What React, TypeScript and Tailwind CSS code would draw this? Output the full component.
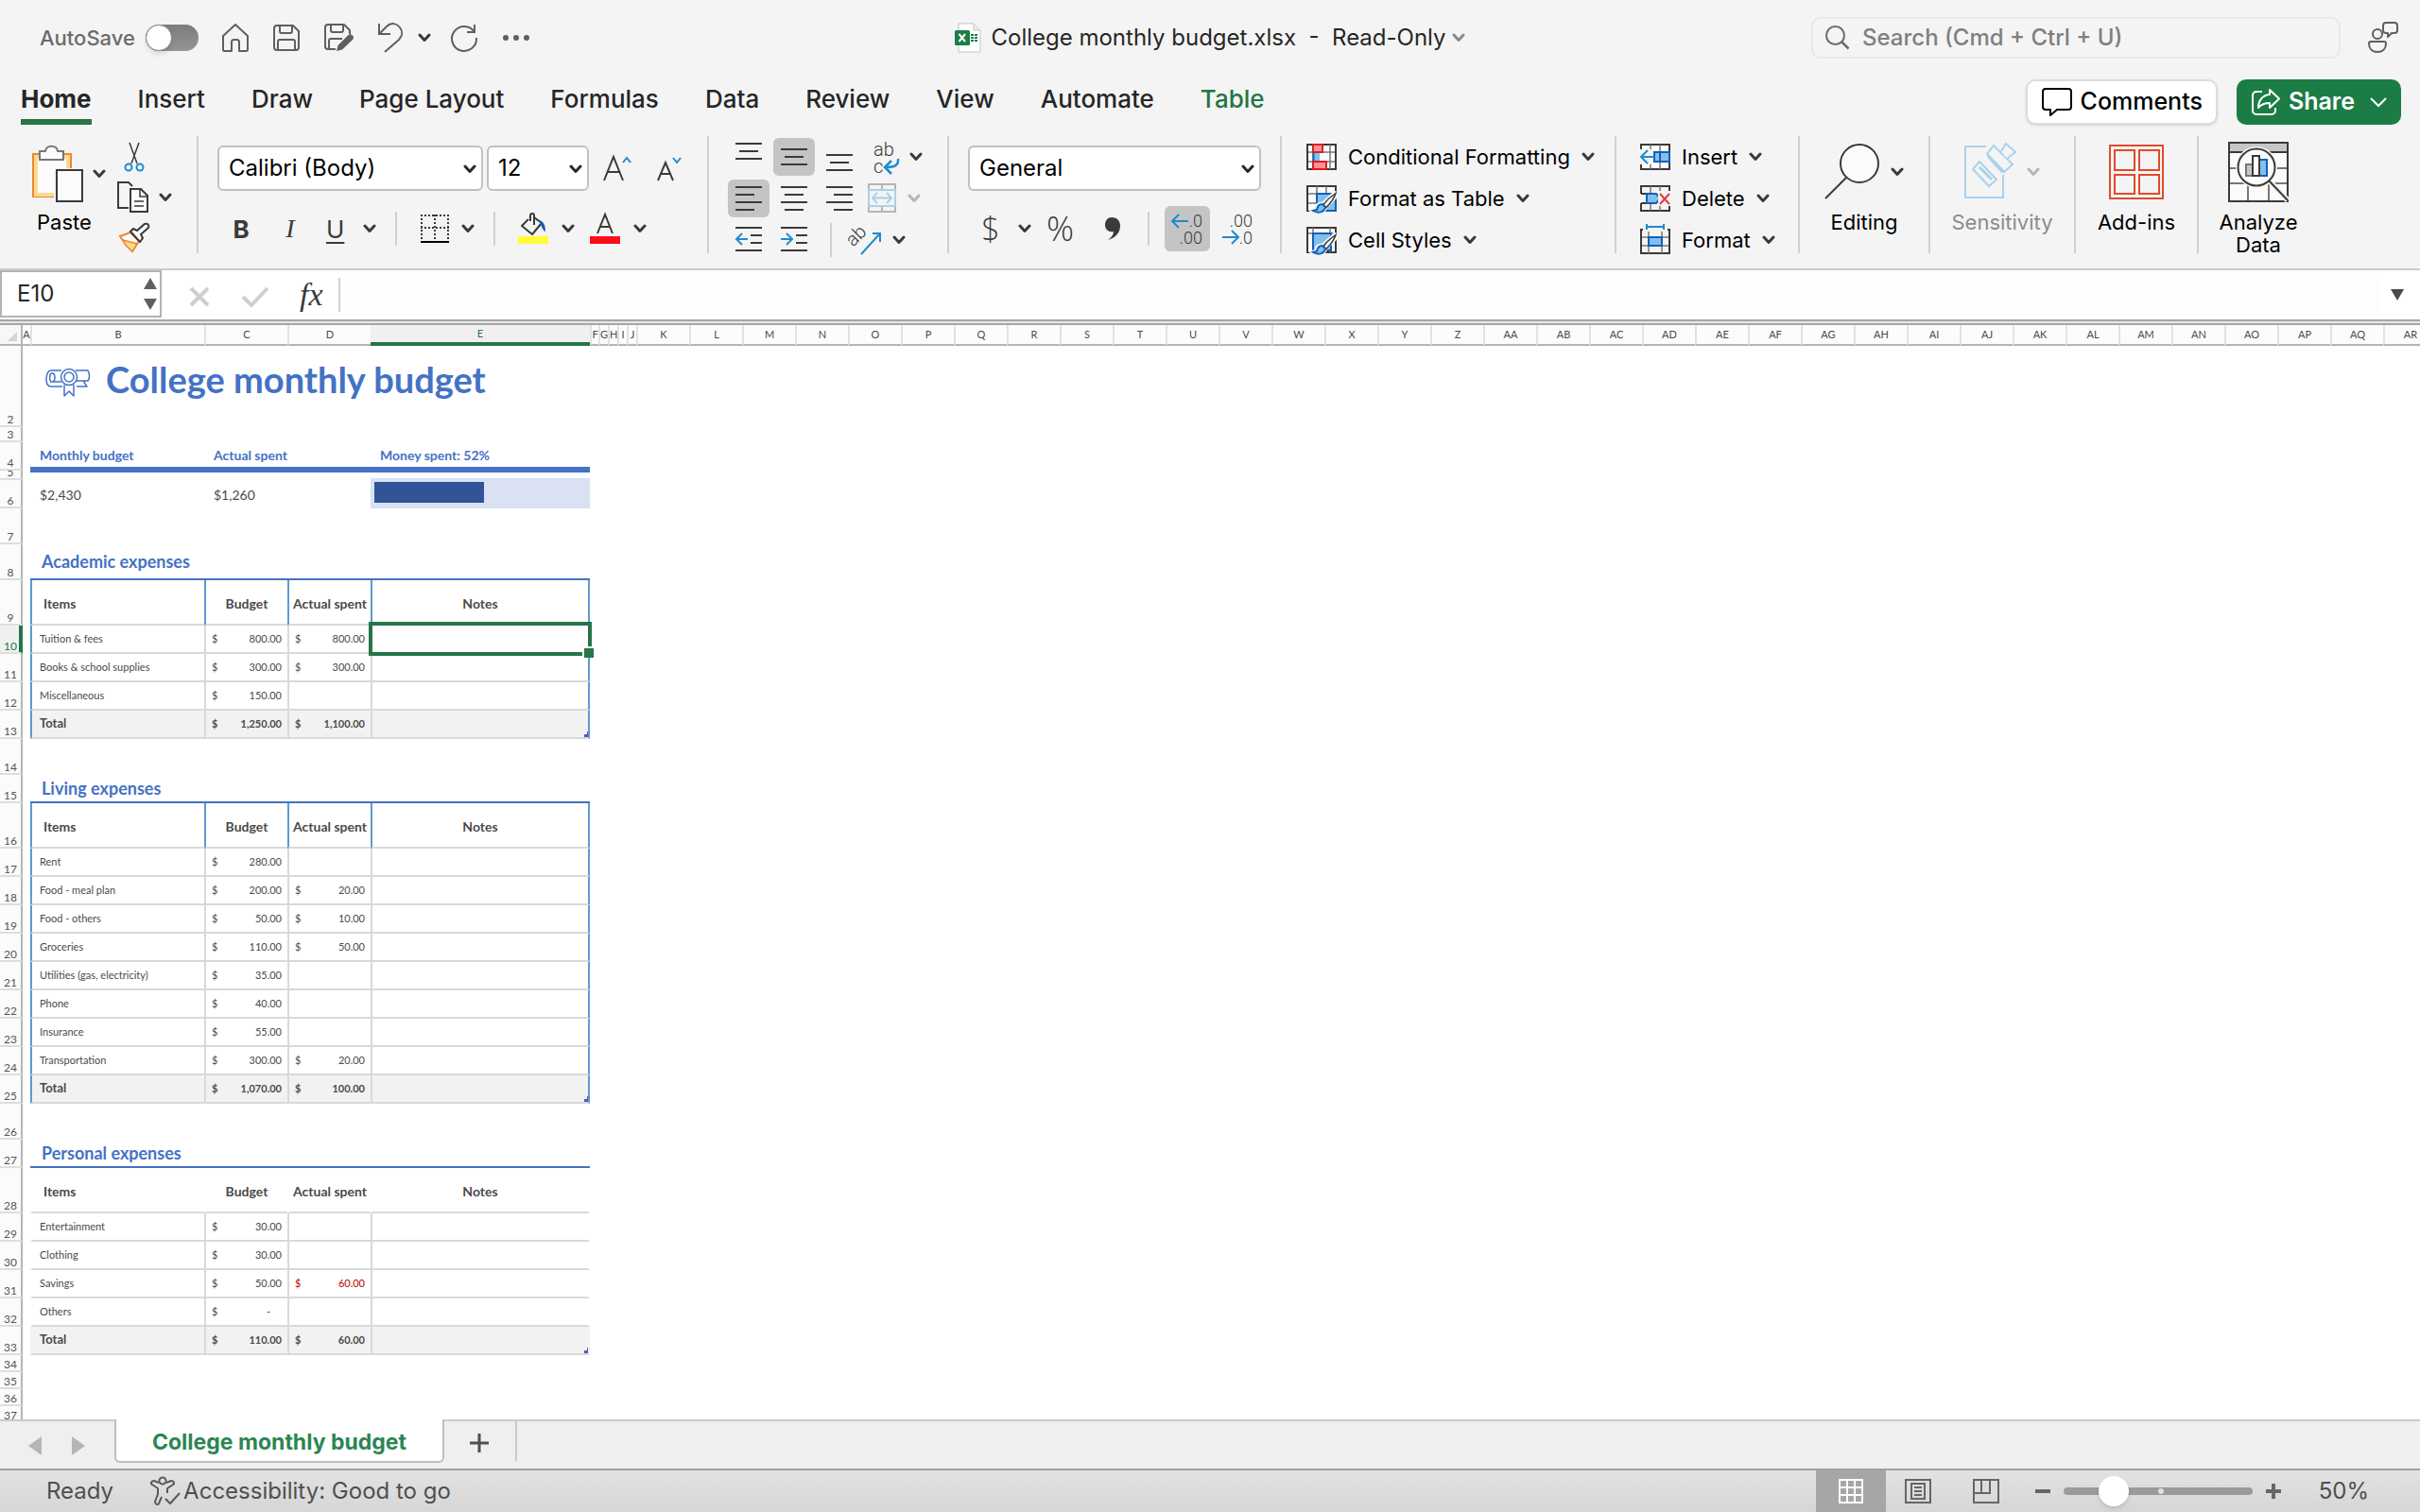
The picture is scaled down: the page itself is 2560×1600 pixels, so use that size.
import { useState } from "react"
import type { ReactNode } from "react"
import { clsx } from "clsx"

type Money = { value: string; over?: boolean }
type Line = { item: string; budget: string; spent?: Money }
type Section = { title: string; outlined: boolean; firstRow: number; lines: Line[]; total: Line }

const tabs = ["Home", "Insert", "Draw", "Page Layout", "Formulas", "Data", "Review", "View", "Automate", "Table"]

const letters = "ABCDEFGHIJKLMNOPQRSTUVWXYZ".split("")
const columns = [...letters, ...letters.slice(0, 18).map((letter) => `A${letter}`)]
const columnWidths: Record<string, string> = {
  A: "w-2",
  B: "w-[184px]",
  C: "w-[88px]",
  D: "w-[88px]",
  E: "w-[232px]",
  F: "w-[9px]",
  G: "w-[10px]",
  H: "w-[10px]",
  I: "w-[10px]",
  J: "w-[10px]",
}

const sections: Section[] = [
  {
    title: "Academic expenses",
    outlined: true,
    firstRow: 8,
    lines: [
      { item: "Tuition & fees", budget: "800.00", spent: { value: "800.00" } },
      { item: "Books & school supplies", budget: "300.00", spent: { value: "300.00" } },
      { item: "Miscellaneous", budget: "150.00" },
    ],
    total: { item: "Total", budget: "1,250.00", spent: { value: "1,100.00" } },
  },
  {
    title: "Living expenses",
    outlined: true,
    firstRow: 15,
    lines: [
      { item: "Rent", budget: "280.00" },
      { item: "Food - meal plan", budget: "200.00", spent: { value: "20.00" } },
      { item: "Food - others", budget: "50.00", spent: { value: "10.00" } },
      { item: "Groceries", budget: "110.00", spent: { value: "50.00" } },
      { item: "Utilities (gas, electricity)", budget: "35.00" },
      { item: "Phone", budget: "40.00" },
      { item: "Insurance", budget: "55.00" },
      { item: "Transportation", budget: "300.00", spent: { value: "20.00" } },
    ],
    total: { item: "Total", budget: "1,070.00", spent: { value: "100.00" } },
  },
  {
    title: "Personal expenses",
    outlined: false,
    firstRow: 27,
    lines: [
      { item: "Entertainment", budget: "30.00" },
      { item: "Clothing", budget: "30.00" },
      { item: "Savings", budget: "50.00", spent: { value: "60.00", over: true } },
      { item: "Others", budget: "-" },
    ],
    total: { item: "Total", budget: "110.00", spent: { value: "60.00" } },
  },
]

/* ---------- icons ---------- */

function Chevron({ className = "text-[#3a3a3a]" }: { className?: string }) {
  return (
    <svg width="14" height="10" viewBox="0 0 14 10" fill="none" stroke="currentColor" strokeWidth="3" className={clsx("shrink-0", className)}>
      <path d="M2 2l5 5.5L12 2" strokeLinecap="round" strokeLinejoin="round" />
    </svg>
  )
}

function Icon({ w, h, children, className }: { w: number; h: number; children: ReactNode; className?: string }) {
  return (
    <svg width={w} height={h} viewBox={`0 0 ${w} ${h}`} fill="none" className={clsx("shrink-0 overflow-visible", className)}>
      {children}
    </svg>
  )
}

const HomeIcon = () => (
  <Icon w={30} h={32}>
    <path d="M2 14L15 2l13 12v14.500a1.500 1.500 0 0 1-1.500 1.500H19v-9.500a2.500 2.500 0 0 0-2.500-2.500h-3a2.500 2.500 0 0 0-2.500 2.500V30H3.500A1.500 1.500 0 0 1 2 28.500z" stroke="#5f5f5f" strokeWidth="2" strokeLinejoin="round" />
  </Icon>
)

const SaveIcon = () => (
  <Icon w={30} h={30}>
    <path d="M5 2h17l6 6v17a3 3 0 0 1-3 3H5a3 3 0 0 1-3-3V5a3 3 0 0 1 3-3z" stroke="#5f5f5f" strokeWidth="2" />
    <path d="M8 2v6a2 2 0 0 0 2 2h9a2 2 0 0 0 2-2V2M6 28V19a2 2 0 0 1 2-2h14a2 2 0 0 1 2 2v9" stroke="#5f5f5f" strokeWidth="2" />
  </Icon>
)

const SaveEditIcon = () => (
  <Icon w={32} h={32}>
    <path d="M13 28H5a3 3 0 0 1-3-3V5a3 3 0 0 1 3-3h17l6 6v4M8 2v6a2 2 0 0 0 2 2h9a2 2 0 0 0 2-2V2M6 28V19a2 2 0 0 1 2-2h12" stroke="#5f5f5f" strokeWidth="2" />
    <path d="M14 30l1.500-6L26 13.500a3 3 0 0 1 5 4.500L20 28.500z" fill="#5f5f5f" />
  </Icon>
)

const UndoIcon = () => (
  <Icon w={30} h={34}>
    <path d="M3 2v11h12M3.500 12.500L11 5c5-5 11-3 14 1s3 9-1 13L9 32" stroke="#5f5f5f" strokeWidth="2" />
  </Icon>
)

const RedoIcon = () => (
  <Icon w={30} h={30}>
    <path d="M26 1v8h-8M26 9A13 13 0 1 0 28 15" stroke="#5f5f5f" strokeWidth="2" />
  </Icon>
)

const FileIcon = () => (
  <Icon w={28} h={32}>
    <path d="M4 1h16l7 7v23H4z" fill="#fff" stroke="#c4c4c4" />
    <path d="M20 1v7h7" fill="#eee" stroke="#c4c4c4" />
    <rect y="8" width="16" height="16" rx="1.500" fill="#1b7e45" />
    <path d="M4.500 12l6.500 8M11 12l-6.500 8" stroke="#fff" strokeWidth="2" />
    <path d="M17 12h3v2h-3zM21 12h3v2h-3zM17 15h3v2h-3zM21 15h3v2h-3zM17 18h3v2h-3zM21 18h3v2h-3z" fill="#1b7e45" />
  </Icon>
)

const SearchIcon = () => (
  <Icon w={28} h={28}>
    <circle cx="11.500" cy="11.500" r="9.500" stroke="#6b6b6b" strokeWidth="2" />
    <path d="M18.500 18.500l7 7" stroke="#6b6b6b" strokeWidth="2.500" />
  </Icon>
)

const PresenceIcon = () => (
  <Icon w={34} h={34}>
    <circle cx="11" cy="13" r="5" stroke="#5f5f5f" strokeWidth="2" />
    <path d="M4 21h14a2 2 0 0 1 2 2c0 5-3 9-9 9s-9-4-9-9a2 2 0 0 1 2-2zM20 1h9a3 3 0 0 1 3 3v5a3 3 0 0 1-3 3h-3l-4 4v-4h-2a3 3 0 0 1-3-3V4a3 3 0 0 1 3-3z" stroke="#5f5f5f" strokeWidth="2" strokeLinejoin="round" />
  </Icon>
)

const CommentIcon = () => (
  <Icon w={34} h={32}>
    <path d="M5 2h24a3 3 0 0 1 3 3v16a3 3 0 0 1-3 3H17l-7 6v-6H5a3 3 0 0 1-3-3V5a3 3 0 0 1 3-3z" stroke="#000" strokeWidth="2" strokeLinejoin="round" />
  </Icon>
)

const ShareIcon = () => (
  <Icon w={32} h={30}>
    <path d="M12 4H6a4 4 0 0 0-4 4v16a4 4 0 0 0 4 4h16a4 4 0 0 0 4-4v-3" stroke="#fff" strokeWidth="2" />
    <path d="M20 2l10 9.500L20 21v-5c-6 0-9 1.500-12 5 0-8 5-13.500 12-14z" stroke="#fff" strokeWidth="2" strokeLinejoin="round" />
  </Icon>
)

const PasteIcon = () => (
  <Icon w={56} h={60}>
    <path d="M2 9h40v45H2z" fill="#fbfbfb" stroke="#ed8733" strokeWidth="2" />
    <path d="M5 12h34v40H5z" stroke="#f8dc8e" strokeWidth="4" />
    <path d="M9 15V6h6c1-7 12-7 13 0h6v9z" fill="#fbfbfb" stroke="#797774" strokeWidth="2" />
    <path d="M24 24h32v36H24z" fill="#f4f4f4" />
    <path d="M27 26h27v33H27z" fill="#fbfbfb" stroke="#3a3a38" strokeWidth="2" />
  </Icon>
)

const CutIcon = () => (
  <Icon w={22} h={32}>
    <path d="M6 1l8 22M16 1L8 23" stroke="#3a3a38" strokeWidth="1.500" />
    <circle cx="5" cy="27" r="3.500" stroke="#1e8bcd" strokeWidth="2" />
    <circle cx="17" cy="27" r="3.500" stroke="#1e8bcd" strokeWidth="2" />
  </Icon>
)

const CopyIcon = () => (
  <Icon w={34} h={34}>
    <path d="M12 28H1V1h11l4 4" stroke="#3a3a38" strokeWidth="2" />
    <path d="M14 8h11l7 7v17H14z" fill="#fbfbfb" stroke="#3a3a38" strokeWidth="2" />
    <path d="M24 8v8h8M18 21h10M18 26h10" stroke="#3a3a38" strokeWidth="1.500" />
  </Icon>
)

const PainterIcon = () => (
  <Icon w={34} h={32}>
    <path d="M2 14l11-4 9 9-7 11C11 25 6 21 2 14z" fill="#fbfbfb" stroke="#ed8733" strokeWidth="2" />
    <path d="M5 18l15 4-5 8c-4-3-8-7-10-12z" fill="#f8dc8e" stroke="#ed8733" strokeWidth="1.500" />
    <path d="M13 9l3-3 4 2 8-7c3-1 5 1 4 4l-8 7 2 4-3 4z" fill="#fbfbfb" stroke="#3a3a38" strokeWidth="2" />
  </Icon>
)

const BordersIcon = () => (
  <Icon w={32} h={32}>
    <path d="M1 2h30M1 15h30M2 1v26M16 1v26M30 1v26" stroke="#3a3a38" strokeWidth="2" strokeDasharray="2 2" />
    <path d="M1 30h30" stroke="#000" strokeWidth="2" />
  </Icon>
)

const FillIcon = () => (
  <Icon w={32} h={34}>
    <path d="M11 7L4 14l11 9L25 11 17 5v8M13 9V3a2 2 0 0 1 4 0v3" stroke="#3a3a38" strokeWidth="2" strokeLinejoin="round" />
    <path d="M22 8c5 1 7 5 7 12-3-1-4-5-5-8z" fill="#1160b7" />
    <rect y="25" width="32" height="8" fill="#fffb38" />
  </Icon>
)

const FontColorIcon = () => (
  <Icon w={32} h={34}>
    <path d="M8 22l8-20 8 20M11 15h10" stroke="#3a3a38" strokeWidth="2" />
    <rect y="25" width="32" height="8" fill="#fc0d1b" />
  </Icon>
)

const GrowFontIcon = () => (
  <Icon w={32} h={30}>
    <path d="M2 28L12 3l10 25M6 19h12" stroke="#3a3a38" strokeWidth="2" />
    <path d="M22 9l4-5 4 5" stroke="#1e8bcd" strokeWidth="2" />
  </Icon>
)

const ShrinkFontIcon = () => (
  <Icon w={30} h={30}>
    <path d="M3 28l8-19 8 19M6 21h10" stroke="#3a3a38" strokeWidth="2" />
    <path d="M19 4l4 5 4-5" stroke="#1e8bcd" strokeWidth="2" />
  </Icon>
)

const LinesIcon = ({ d }: { d: string }) => (
  <Icon w={28} h={30}>
    <path d={d} stroke="#3a3a38" strokeWidth="2" />
  </Icon>
)

const IndentIcon = ({ arrow }: { arrow: string }) => (
  <Icon w={28} h={30}>
    <path d="M0 2h28M16 10h12M16 18h12M0 26h28" stroke="#3a3a38" strokeWidth="2" />
    <path d={arrow} stroke="#1e8bcd" strokeWidth="2" />
  </Icon>
)

const WrapIcon = () => (
  <Icon w={30} h={36}>
    <text x="0" y="17" fontSize="20" fontFamily="Roboto, sans-serif" fontWeight="300" fill="#3a3a38">ab</text>
    <text x="0" y="35" fontSize="20" fontFamily="Roboto, sans-serif" fontWeight="300" fill="#3a3a38">c</text>
    <path d="M26 20c1 7-4 9-13 9M19 22l-7 7 7 7" stroke="#1e8bcd" strokeWidth="2.500" />
  </Icon>
)

const MergeIcon = () => (
  <Icon w={30} h={32}>
    <path d="M1 1h28v29H1zM15 1v6M15 24v6" stroke="#b5b5b3" strokeWidth="2" />
    <path d="M1 7h28v17H1z" fill="#f4f4f4" stroke="#a9d1ea" strokeWidth="2" />
    <path d="M5 15.500h20M10 10l-5 5.500 5 5.500M20 10l5 5.500-5 5.500" stroke="#a9d1ea" strokeWidth="2" />
  </Icon>
)

const OrientationIcon = () => (
  <Icon w={34} h={34}>
    <text x="3" y="22" fontSize="20" fontFamily="Roboto, sans-serif" fontWeight="300" fill="#3a3a38" transform="rotate(-45 6 24)">ab</text>
    <path d="M11 32L31 10M23 10h8v9" stroke="#1e8bcd" strokeWidth="2" />
  </Icon>
)

const DecimalIcon = ({ increase }: { increase: boolean }) => (
  <Icon w={34} h={34}>
    <g fontSize="18" fontFamily="Roboto, sans-serif" fontWeight="300" fill="#3a3a38" textAnchor="end">
      <text x="33" y="15">{increase ? ".0" : ".00"}</text>
      <text x="33" y="33">{increase ? ".00" : ".0"}</text>
    </g>
    <path d={increase ? "M1 9h17M8 2L1 9l7 7" : "M1 26h17M11 19l7 7-7 7"} stroke="#1e8bcd" strokeWidth="2" />
  </Icon>
)

const ConditionalIcon = () => (
  <Icon w={32} h={30}>
    <path d="M1 2h30v26H1z" fill="#fff" stroke="#3a3a38" strokeWidth="2" />
    <path d="M2 10h28M2 20h28M7 2v26M25 2v26" stroke="#797774" strokeWidth="1.500" />
    <path d="M7 2h10v8H7zM7 20h14v8H7z" fill="#ff9194" stroke="#d92020" strokeWidth="2" />
    <path d="M7 11h7v8H7z" fill="#83beec" />
    <path d="M7.500 11v8" stroke="#1160b7" strokeWidth="2" />
  </Icon>
)

const Brush = () => (
  <>
    <path d="M30 10L17 22c-5-1-7 2-7 6l-4 1c5 4 13 3 14-4l13-13z" fill="#f4f4f4" stroke="#f4f4f4" strokeWidth="4" />
    <path d="M31 10.500c-6 4-10 8-13 12l3 3c4-4 8-9 10-15z" fill="#fff" stroke="#3a3a38" strokeWidth="1.500" />
    <path d="M17 22c-4 0-5 2-6 6l-4 1c5 3 12 2 13-4z" fill="#83beec" stroke="#1160b7" strokeWidth="2" />
  </>
)

const FormatTableIcon = () => (
  <Icon w={32} h={32}>
    <path d="M1 3h30v26H1z" fill="#fff" stroke="#3a3a38" strokeWidth="2" />
    <path d="M2 11h28M2 21h28M11 3v26M21 3v26" stroke="#797774" strokeWidth="1.500" />
    <path d="M11 11h20v18H11z" fill="#83beec" stroke="#1160b7" strokeWidth="2" />
    <Brush />
  </Icon>
)

const CellStylesIcon = () => (
  <Icon w={32} h={32}>
    <path d="M1 3h30v26H1z" fill="#fff" stroke="#3a3a38" strokeWidth="2" />
    <path d="M2 9h28M7 3v26M25 3v26" stroke="#797774" strokeWidth="1.500" />
    <path d="M7 9h19v18H7z" fill="#83beec" stroke="#1160b7" strokeWidth="2" />
    <Brush />
  </Icon>
)

const InsertCellsIcon = () => (
  <Icon w={32} h={30}>
    <path d="M1 2h30v26H1z" fill="#fff" stroke="#3a3a38" strokeWidth="2" />
    <path d="M11 2v26M21 2v26" stroke="#797774" strokeWidth="1.500" />
    <path d="M0 7h14v16H0z" fill="#f4f4f4" />
    <path d="M15 10h16v10H15z" fill="#83beec" stroke="#1160b7" strokeWidth="2" />
    <path d="M21 10v10" stroke="#1160b7" strokeWidth="2" />
    <path d="M2 15h13M8 8l-7 7 7 7" stroke="#1e8bcd" strokeWidth="2" />
  </Icon>
)

const DeleteCellsIcon = () => (
  <Icon w={32} h={30}>
    <path d="M1 10V2h30v8M1 20v8h30v-8M1 10h6M1 20h6" stroke="#3a3a38" strokeWidth="2" />
    <path d="M11 2v8M21 2v6M11 20v8M21 22v6" stroke="#797774" strokeWidth="1.500" />
    <path d="M7 10h10l4 5-4 5H7z" fill="#83beec" stroke="#1160b7" strokeWidth="2" />
    <path d="M19 7h13v16H19z" fill="#f4f4f4" />
    <path d="M21 10l10 11M31 10L21 21" stroke="#e23b3f" strokeWidth="2" />
  </Icon>
)

const FormatCellsIcon = () => (
  <Icon w={32} h={34}>
    <path d="M3 6H1v25h30V6h-2" stroke="#3a3a38" strokeWidth="2" />
    <path d="M2 14h28M2 23h28M9 8v23M23 8v23" stroke="#797774" strokeWidth="1.500" />
    <path d="M9 14h14v9H9z" fill="#83beec" stroke="#1160b7" strokeWidth="2" />
    <path d="M7 3h18M7 0v6M25 0v6" stroke="#1e8bcd" strokeWidth="2" />
  </Icon>
)

const EditingIcon = () => (
  <Icon w={60} h={62}>
    <circle cx="37" cy="22" r="20" fill="#fbfbfb" stroke="#3a3a38" strokeWidth="2" />
    <path d="M23 37L1 59" stroke="#3a3a38" strokeWidth="2" />
  </Icon>
)

const SensitivityIcon = () => (
  <Icon w={56} h={62}>
    <path d="M23 4H1v54h40V34" stroke="#a9d1ea" strokeWidth="2" />
    <path d="M16 20L34 39l-8 7L9 28z" stroke="#a9d1ea" strokeWidth="2" />
    <path d="M16 26l13 13" stroke="#a9d1ea" strokeWidth="3" />
    <path d="M31 3l20 20-9 8-18-19z" fill="#f4f4f4" stroke="#a9d1ea" strokeWidth="2" />
    <path d="M25 12l18 18-4 2-15-17z" fill="#a9d1ea" />
    <path d="M39 9l5-8 10 9-9 7" fill="#f4f4f4" stroke="#a9d1ea" strokeWidth="2" />
  </Icon>
)

const AddInsIcon = () => (
  <Icon w={58} h={60}>
    <path d="M1 2h56v56H1zM6 7h21v21H6zM32 7h21v21H32zM6 33h21v20H6zM32 33h21v20H32z" stroke="#e04a2b" strokeWidth="2" />
  </Icon>
)

const AnalyzeIcon = () => (
  <Icon w={64} h={64}>
    <path d="M1 1h62v62H1z" fill="#fbfbfb" />
    <path d="M2 2h60v8H2z" fill="#c8c6c4" />
    <path d="M2 28h60M2 44h60M21 44v18M43 44v18" stroke="#797774" strokeWidth="2" />
    <path d="M1 1h62v62H1zM1 11h62" stroke="#3a3a38" strokeWidth="2" />
    <circle cx="30" cy="27" r="22" fill="#f4f4f4" />
    <circle cx="30" cy="27" r="19.500" fill="#fbfbfb" stroke="#3a3a38" strokeWidth="2" />
    <path d="M19 24h8v12h-8z" fill="#c8c6c4" stroke="#797774" strokeWidth="2" />
    <path d="M33 19h8v17h-8z" fill="#83beec" stroke="#1160b7" strokeWidth="2" />
    <path d="M26 15h7v21h-7z" fill="#fff" stroke="#3a3a38" strokeWidth="2" />
    <path d="M44 42l19 20" stroke="#f4f4f4" strokeWidth="6" />
    <path d="M43 41l20 21" stroke="#3a3a38" strokeWidth="2" />
  </Icon>
)

const DiplomaIcon = () => (
  <Icon w={48} h={30} className="mt-2">
    <g stroke="#4472c4" strokeWidth="1.500" strokeLinejoin="round">
      <path d="M17 2H6C3 2 1 6 1 11s2 8 5 8h12M7 14c4 0 4-9 0-9-3 0-3 7-1 9M5 14h12M32 2h13c2 4 2 8 0 11H33M33 19h11l-4-6" />
      <circle cx="25" cy="9" r="8.500" fill="#fff" />
      <circle cx="25" cy="9" r="5" />
      <path d="M20 17v12l5-5 5 5V17" />
    </g>
  </Icon>
)

const AccessibilityIcon = () => (
  <Icon w={34} h={32}>
    <circle cx="14" cy="5" r="3.500" stroke="#5a5a5a" strokeWidth="2" />
    <path d="M10 7L5 5c-3 0-4 3-2 4l6 4v6L6 27c0 3 3 4 4 2l3-7M18 7l5-2c3 0 4 3 2 4l-6 4v5M17 24l5 5 10-11" stroke="#5a5a5a" strokeWidth="2" strokeLinejoin="round" />
  </Icon>
)

/* ---------- small building blocks ---------- */

function Group({ children, className, last }: { children: ReactNode; className?: string; last?: boolean }) {
  return <div className={clsx("flex h-[124px] shrink-0", !last && "border-r-2 border-[#d0d0d0]", className)}>{children}</div>
}

function Divider({ className }: { className?: string }) {
  return <span className={clsx("h-9 w-[2px] shrink-0 bg-[#d0d0d0]", className)} />
}

function ToolButton({ label, active, className, children }: { label: string; active?: boolean; className?: string; children: ReactNode }) {
  return (
    <button type="button" aria-label={label} className={clsx("flex shrink-0 items-center justify-center", active && "rounded-md bg-[#c4c4c4]", className)}>
      {children}
    </button>
  )
}

function BigButton({ icon, label, menu, disabled, className }: { icon: ReactNode; label: string; menu?: boolean; disabled?: boolean; className?: string }) {
  return (
    <button type="button" disabled={disabled} className={clsx("flex flex-col items-center pt-[6px]", disabled ? "text-[#8c8c8c]" : "text-black", className)}>
      <span className="flex h-16 items-center gap-[10px]">
        {icon}
        {menu && <Chevron className={disabled ? "text-[#b5b5b5]" : "text-[#3a3a3a]"} />}
      </span>
      <span className="mt-[9px] text-[22px] leading-6">{label}</span>
    </button>
  )
}

function MenuRow({ icon, label }: { icon: ReactNode; label: string }) {
  return (
    <button type="button" className="flex h-10 shrink-0 items-center gap-3 text-[22px] text-black">
      {icon}
      <span className="flex items-center gap-3 whitespace-nowrap">
        {label}
        <Chevron />
      </span>
    </button>
  )
}

function RibbonSelect({ label, value, className }: { label: string; value: string; className: string }) {
  return (
    <span className={clsx("relative flex h-12", className)}>
      <select aria-label={label} defaultValue={value} className="w-full appearance-none rounded-md border-2 border-[#c0c0c0] bg-white pl-[10px] text-2xl text-black">
        <option>{value}</option>
      </select>
      <Chevron className="pointer-events-none absolute top-5 right-[7px] text-[#2a2a2a]" />
    </span>
  )
}

/* ---------- chrome ---------- */

function TitleBar() {
  return (
    <div className="grid h-20 grid-cols-[1fr_auto_1fr] items-center px-5">
      <div className="flex items-center pl-[22px]">
        <label className="flex items-center gap-[11px] text-[22px] font-medium text-[#6b6b6b]">
          AutoSave
          <input
            type="checkbox"
            role="switch"
            className="flex h-7 w-14 appearance-none rounded-full bg-linear-to-b from-[#7c7c7c] to-[#959595] before:h-7 before:w-7 before:rounded-full before:border before:border-[#8a8a8a] before:bg-white before:shadow-md"
          />
        </label>
        <div className="ml-6 flex items-center gap-6">
          <ToolButton label="Home"><HomeIcon /></ToolButton>
          <ToolButton label="Save"><SaveIcon /></ToolButton>
          <ToolButton label="Save as"><SaveEditIcon /></ToolButton>
        </div>
        <ToolButton label="Undo" className="ml-6 gap-[14px]">
          <UndoIcon />
          <Chevron />
        </ToolButton>
        <ToolButton label="Redo" className="ml-5"><RedoIcon /></ToolButton>
        <ToolButton label="More commands" className="ml-[26px]">
          <Icon w={28} h={6}>
            <path d="M3 0a3 3 0 1 0 0 6 3 3 0 0 0 0-6zM14 0a3 3 0 1 0 0 6 3 3 0 0 0 0-6zM25 0a3 3 0 1 0 0 6 3 3 0 0 0 0-6z" fill="#5f5f5f" />
          </Icon>
        </ToolButton>
      </div>
      <h1 className="flex items-center gap-[10px] text-2xl text-[#262626]">
        <FileIcon />
        <span className="whitespace-pre">College monthly budget.xlsx&nbsp; -&nbsp; Read-Only</span>
        <Chevron className="-ml-1 text-[#8a8a8a]" />
      </h1>
      <div className="flex items-center justify-end gap-7 pr-[2px]">
        <label className="flex h-11 w-[560px] items-center gap-3 rounded-[10px] border-2 border-[#e8e8e8] px-3">
          <SearchIcon />
          <input type="search" aria-label="Search" placeholder="Search (Cmd + Ctrl + U)" className="w-full bg-transparent text-2xl font-medium outline-none placeholder:text-[#7f7f7f]" />
        </label>
        <ToolButton label="Presence"><PresenceIcon /></ToolButton>
      </div>
    </div>
  )
}

function TabBar() {
  return (
    <div className="flex h-14 items-start justify-between pr-5 pl-[22px]">
      <nav className="flex gap-[49px] pt-[9px] text-[26px] leading-8 font-medium text-[#262626]">
        {tabs.map((tab) => (
          <a
            key={tab}
            href={`#${tab}`}
            className={clsx(
              "border-b-[6px] pb-[5px] whitespace-nowrap",
              tab === "Home" ? "border-[#257547] font-bold" : "border-transparent",
              tab === "Table" && "text-[#257547]",
            )}
          >
            {tab}
          </a>
        ))}
      </nav>
      <div className="flex gap-5 pt-1">
        <button type="button" className="flex h-12 items-center gap-2 rounded-[10px] border-2 border-[#dcdcdc] bg-white px-[14px] text-[25px] font-medium text-black shadow-sm">
          <CommentIcon />
          Comments
        </button>
        <button type="button" className="flex h-12 items-center gap-2 rounded-[10px] bg-[#1c7c45] px-[15px] text-[25px] font-semibold text-white">
          <ShareIcon />
          Share
          <svg width="18" height="12" viewBox="0 0 18 12" fill="none" stroke="currentColor" strokeWidth="2" className="ml-2">
            <path d="M1 2l8 8 8-8" />
          </svg>
        </button>
      </div>
    </div>
  )
}

function Ribbon() {
  return (
    <div className="flex border-b-2 border-[#cbcbcb] pt-2 pb-4">
      <Group className="w-[210px] gap-3 pl-[33px]">
        <button type="button" className="flex flex-col items-start pt-[10px] text-[22px] text-black">
          <span className="flex h-[60px] items-center gap-[9px]">
            <PasteIcon />
            <Chevron />
          </span>
          <span className="mt-[9px] pl-[6px] leading-6">Paste</span>
        </button>
        <div className="flex flex-col gap-[10px] pt-[6px]">
          <ToolButton label="Cut" className="w-9"><CutIcon /></ToolButton>
          <ToolButton label="Copy" className="gap-[10px]"><CopyIcon /><Chevron /></ToolButton>
          <ToolButton label="Format painter" className="w-9"><PainterIcon /></ToolButton>
        </div>
      </Group>

      <Group className="w-[540px] flex-col pt-[10px] pl-5">
        <div className="flex items-center">
          <RibbonSelect label="Font" value="Calibri (Body)" className="w-[281px]" />
          <RibbonSelect label="Font size" value="12" className="ml-1 w-[108px]" />
          <ToolButton label="Increase font size" className="ml-[14px]"><GrowFontIcon /></ToolButton>
          <ToolButton label="Decrease font size" className="ml-6"><ShrinkFontIcon /></ToolButton>
        </div>
        <div className="mt-[22px] flex h-9 items-center pl-[3px] text-[26px] text-[#3a3a38]">
          <ToolButton label="Bold" className="w-11 font-bold">B</ToolButton>
          <ToolButton label="Italic" className="ml-2 w-11 font-['Liberation_Serif',serif] text-[28px] italic">I</ToolButton>
          <ToolButton label="Underline" className="ml-2 gap-5 pl-2">
            <span className="underline decoration-2 underline-offset-4">U</span>
            <Chevron />
          </ToolButton>
          <Divider className="ml-5" />
          <ToolButton label="Borders" className="ml-6 gap-3"><BordersIcon /><Chevron /></ToolButton>
          <Divider className="ml-5" />
          <ToolButton label="Fill color" className="ml-6 gap-[14px]"><FillIcon /><Chevron /></ToolButton>
          <ToolButton label="Font color" className="ml-4 gap-[14px]"><FontColorIcon /><Chevron /></ToolButton>
        </div>
      </Group>

      <Group className="w-[254px] flex-col gap-1 pt-[2px] pl-5">
        <div className="flex gap-1">
          <ToolButton label="Top align" className="h-10 w-11"><LinesIcon d="M0 1h28M4 9h20M0 17h28" /></ToolButton>
          <ToolButton label="Middle align" active className="h-10 w-11"><LinesIcon d="M0 7h28M4 15h20M0 23h28" /></ToolButton>
          <ToolButton label="Bottom align" className="h-10 w-11"><LinesIcon d="M0 13h28M4 21h20M0 29h28" /></ToolButton>
          <ToolButton label="Wrap text" className="ml-[10px] gap-2"><WrapIcon /><Chevron /></ToolButton>
        </div>
        <div className="flex gap-1">
          <ToolButton label="Align left" active className="h-10 w-11"><LinesIcon d="M0 3h28M0 11h20M0 19h28M0 27h20" /></ToolButton>
          <ToolButton label="Align center" className="h-10 w-11"><LinesIcon d="M0 3h28M4 11h20M0 19h28M4 27h20" /></ToolButton>
          <ToolButton label="Align right" className="h-10 w-11"><LinesIcon d="M0 3h28M8 11h20M0 19h28M8 27h20" /></ToolButton>
          <ToolButton label="Merge cells" className="ml-1 gap-3"><MergeIcon /><Chevron className="text-[#b5b5b5]" /></ToolButton>
        </div>
        <div className="flex items-center gap-1">
          <ToolButton label="Decrease indent" className="h-10 w-11"><IndentIcon arrow="M13 14H1M7 8l-6 6 6 6" /></ToolButton>
          <ToolButton label="Increase indent" className="h-10 w-11"><IndentIcon arrow="M0 14h11M6 8l6 6-6 6" /></ToolButton>
          <Divider className="ml-3" />
          <ToolButton label="Orientation" className="ml-4 gap-[10px]"><OrientationIcon /><Chevron /></ToolButton>
        </div>
      </Group>

      <Group className="w-[352px] flex-col pt-[10px] pl-5">
        <RibbonSelect label="Number format" value="General" className="w-[310px]" />
        <div className="mt-4 flex h-12 items-center font-['Open_Sans',sans-serif] text-[#3a3a38]">
          <ToolButton label="Currency" className="w-12 text-[34px] font-light">$</ToolButton>
          <Chevron className="ml-[5px]" />
          <ToolButton label="Percent" className="ml-4 text-[36px] font-light">%</ToolButton>
          <ToolButton label="Comma style" className="ml-8">
            <Icon w={18} h={28}>
              <path d="M8 2c6 0 9 4 9 9 0 8-6 13-13 15 4-3 6-6 6-9-5 1-9-2-9-7s3-8 7-8z" fill="#3a3a38" />
            </Icon>
          </ToolButton>
          <Divider className="ml-7" />
          <ToolButton label="Increase decimal" active className="ml-4 h-12 w-12"><DecimalIcon increase /></ToolButton>
          <ToolButton label="Decrease decimal" className="ml-3"><DecimalIcon increase={false} /></ToolButton>
        </div>
      </Group>

      <Group className="w-[354px] flex-col gap-1 pt-[2px] pl-[26px]">
        <MenuRow icon={<ConditionalIcon />} label="Conditional Formatting" />
        <MenuRow icon={<FormatTableIcon />} label="Format as Table" />
        <MenuRow icon={<CellStylesIcon />} label="Cell Styles" />
      </Group>

      <Group className="w-[194px] flex-col gap-1 pt-[2px] pl-[25px]">
        <MenuRow icon={<InsertCellsIcon />} label="Insert" />
        <MenuRow icon={<DeleteCellsIcon />} label="Delete" />
        <MenuRow icon={<FormatCellsIcon />} label="Format" />
      </Group>

      <Group className="w-[138px] justify-center"><BigButton icon={<EditingIcon />} label="Editing" menu /></Group>
      <Group className="w-[154px] justify-center"><BigButton icon={<SensitivityIcon />} label="Sensitivity" menu disabled /></Group>
      <Group className="w-[130px] justify-center"><BigButton icon={<AddInsIcon />} label="Add-ins" /></Group>
      <Group last className="w-[126px] justify-center"><BigButton icon={<AnalyzeIcon />} label="Analyze Data" className="w-24" /></Group>
    </div>
  )
}

function FormulaBar() {
  return (
    <div className="flex h-[58px] flex-col bg-white">
      <div className="flex h-[52px] items-center">
        <div className="flex h-[50px] w-[171px] items-center self-start border-2 border-[#b3b3b3] pr-[2px] pl-4">
          <input aria-label="Name box" defaultValue="E10" className="w-full text-2xl text-[#262626] outline-none" />
          <Icon w={16} h={36}>
            <path d="M8 1l7 12H1zM8 35l7-12H1z" fill="#5f5f5f" />
          </Icon>
        </div>
        <ToolButton label="Cancel" className="ml-7 pt-1">
          <Icon w={24} h={24}><path d="M3 3l18 18M21 3L3 21" stroke="#cfcfcf" strokeWidth="4" /></Icon>
        </ToolButton>
        <ToolButton label="Enter" className="ml-8 pt-1">
          <Icon w={30} h={24}><path d="M2 12l9 9L28 3" stroke="#cfcfcf" strokeWidth="4" /></Icon>
        </ToolButton>
        <ToolButton label="Insert function" className="ml-8 font-['Liberation_Serif',serif] text-[34px] leading-8 text-[#3a3a3a] italic">
          fx
        </ToolButton>
        <Divider className="ml-4" />
        <input aria-label="Formula" className="ml-3 h-9 flex-1 bg-[#fdfdfd] outline-none" />
        <ToolButton label="Expand formula bar" className="mr-4 ml-3">
          <Icon w={16} h={14}><path d="M1 1h14L8 13z" fill="#4a4a4a" /></Icon>
        </ToolButton>
      </div>
      <div className="h-[6px] border-y-2 border-[#a6a6a6] bg-[#e6e6e6]" />
    </div>
  )
}

/* ---------- sheet ---------- */

function RowHead({ n, size, selected }: { n: number; size: string; selected?: boolean }) {
  return (
    <th
      scope="row"
      className={clsx(
        "border-r-2 border-b-2 border-b-[#dedede] p-0 text-xs leading-3 font-normal",
        selected ? "border-r-[#257547] bg-[#f0f0f0] text-[#257547] shadow-[inset_-2px_0_0_#257547]" : "border-r-[#b5b5b5] bg-[#fbfbfb] text-[#555]",
      )}
    >
      <div className={clsx("flex items-end justify-center overflow-hidden", size)}>{n}</div>
    </th>
  )
}

function BlankRow({ n, size }: { n: number; size: string }) {
  return (
    <tr>
      <RowHead n={n} size={size} />
      <td colSpan={columns.length + 1} />
    </tr>
  )
}

function Amount({ value, over }: Money) {
  return (
    <div className={clsx("flex justify-between", over && "text-[#c00000]")}>
      <span>$</span>
      <span className={value === "-" ? "pr-3" : undefined}>{value}</span>
    </div>
  )
}

function LineRow({ line, n, outlined, total, selected }: { line: Line; n: number; outlined: boolean; total?: boolean; selected?: boolean }) {
  const cell = clsx("border-b-2 border-[#d9d9d9] py-0", total && "bg-[#f2f2f2]")
  return (
    <tr className={total ? "font-bold" : undefined}>
      <RowHead n={n} size="h-7" selected={selected} />
      <td />
      <td className={clsx(cell, "border-l-2 pl-2", outlined ? "border-l-[#5b9bd5]" : "border-l-transparent", total && "text-[13px]")}>{line.item}</td>
      <td className={clsx(cell, "border-l-2 px-[6px]")}><Amount value={line.budget} /></td>
      <td className={clsx(cell, "border-l-2 px-[6px]")}>{line.spent && <Amount {...line.spent} />}</td>
      <td className={clsx(cell, "relative border-x-2", outlined ? "border-r-[#5b9bd5]" : "border-r-transparent")}>
        {selected && (
          <div className="absolute -inset-1 z-10 border-4 border-[#257547]">
            <span className="absolute -right-[6px] -bottom-[6px] h-3 w-3 border-t-2 border-l-2 border-white bg-[#257547]" />
          </div>
        )}
        {total && (
          <svg width="4" height="6" viewBox="0 0 4 6" className="absolute right-0 bottom-0" fill="#4a5fb4">
            <path d="M3 0h1v6H0V3h3z" />
          </svg>
        )}
      </td>
      <td colSpan={columns.length - 4} />
    </tr>
  )
}

function SectionRows({ section }: { section: Section }) {
  const { title, outlined, firstRow, lines, total } = section
  const head = clsx("border-b-2 border-b-[#d9d9d9] p-0 pt-[2px] font-bold", outlined ? "border-x-[#5b9bd5]" : "border-x-transparent")
  return (
    <>
      <tr>
        <RowHead n={firstRow} size={firstRow === 8 ? "h-9" : "h-7"} />
        <td />
        <td colSpan={4} className="border-b-2 border-[#4472c4] py-0 pl-3 text-[18px] leading-6 font-bold text-[#4472c4]">{title}</td>
        <td colSpan={columns.length - 4} />
      </tr>
      <tr className="text-[14px]">
        <RowHead n={firstRow + 1} size="h-[46px]" />
        <td />
        <th scope="col" className={clsx(head, "border-l-2 text-left")}><span className="pl-3">Items</span></th>
        <th scope="col" className={clsx(head, "border-l-2")}>Budget</th>
        <th scope="col" className={clsx(head, "border-l-2 whitespace-nowrap")}>Actual spent</th>
        <th scope="col" className={clsx(head, "border-x-2")}>Notes</th>
        <td colSpan={columns.length - 4} />
      </tr>
      {lines.map((line, i) => (
        <LineRow key={line.item} line={line} n={firstRow + 2 + i} outlined={outlined} selected={firstRow + 2 + i === 10} />
      ))}
      <LineRow line={total} n={firstRow + 2 + lines.length} outlined={outlined} total />
    </>
  )
}

function Sheet() {
  return (
    <div className="min-h-0 flex-1 overflow-hidden bg-white font-['Lato',sans-serif] text-[11px] text-[#4a4a4a]">
      <table className="w-full table-fixed border-separate border-spacing-0">
        <colgroup>
          <col className="w-6" />
          {columns.map((column) => (
            <col key={column} className={columnWidths[column] ?? "w-14"} />
          ))}
          <col />
        </colgroup>
        <thead>
          <tr>
            <td className="h-[22px] border-r-2 border-b-2 border-[#b5b5b5] bg-[#f7f7f7] p-0">
              <svg width="10" height="10" viewBox="0 0 10 10" className="mt-1 ml-2" fill="#d5d5d5"><path d="M10 0v10H0z" /></svg>
            </td>
            {columns.map((column) => (
              <th
                key={column}
                scope="col"
                className={clsx(
                  "p-0 text-[11px] leading-4 font-normal whitespace-nowrap",
                  column === "E" ? "border-b-4 border-[#257547] bg-[#f0f0f0] text-[#257547]" : "border-b-2 border-b-[#b5b5b5] bg-[#fcfcfc]",
                  column !== "A" && column !== "E" && "border-l-2 border-l-[#e2e2e2]",
                )}
              >
                {column}
              </th>
            ))}
            <td />
          </tr>
        </thead>
        <tbody>
          <tr>
            <RowHead n={2} size="h-[84px]" />
            <td />
            <td colSpan={4} className="p-0 align-top">
              <div className="flex items-center gap-4 pt-[11px] pl-4">
                <DiplomaIcon />
                <h2 className="text-[38px] leading-[48px] font-bold whitespace-nowrap text-[#4472c4]">College monthly budget</h2>
              </div>
            </td>
            <td colSpan={columns.length - 4} />
          </tr>
          <BlankRow n={3} size="h-[14px]" />
          <tr className="text-[14px] font-bold text-[#4472c4]">
            <RowHead n={4} size="h-7" />
            <td />
            <td className="border-b-4 border-[#4472c4] py-0 pl-[10px]">Monthly budget</td>
            <td colSpan={2} className="border-b-4 border-[#4472c4] py-0 pl-[10px]">Actual spent</td>
            <td className="border-b-4 border-[#4472c4] py-0 pl-[10px]">Money spent: 52%</td>
            <td colSpan={columns.length - 4} />
          </tr>
          <tr>
            <RowHead n={5} size="h-2" />
            <td />
            <td colSpan={3} className="border-t-2 border-[#4472c4] p-0" />
            <td className="border-t-2 border-b-2 border-t-[#4472c4] border-b-[#d9e1f2] p-0" />
            <td colSpan={columns.length - 4} />
          </tr>
          <tr className="text-[14px]">
            <RowHead n={6} size="h-7" />
            <td />
            <td className="py-0 pl-[10px]">$2,430</td>
            <td colSpan={2} className="py-0 pl-[10px]">$1,260</td>
            <td className="bg-[#d9e1f2] p-0 px-1 pt-[2px] align-top">
              <div role="img" aria-label="52% spent" className="h-[22px] w-[52%] bg-[#305496]" />
            </td>
            <td colSpan={columns.length - 4} />
          </tr>
          <BlankRow n={7} size="h-9" />
          <SectionRows section={sections[0]} />
          <BlankRow n={14} size="h-9" />
          <SectionRows section={sections[1]} />
          <BlankRow n={26} size="h-9" />
          <SectionRows section={sections[2]} />
          {[34, 35, 36, 37].map((n) => (
            <BlankRow key={n} n={n} size="h-4" />
          ))}
        </tbody>
      </table>
    </div>
  )
}

/* ---------- footer ---------- */

function SheetTabs() {
  return (
    <div className="flex h-[54px] items-start border-b-2 border-[#a0a0a0] bg-[#efefef]">
      <div className="flex h-12 w-[121px] items-center gap-[30px] border-t-2 border-[#cbcbcb] pt-[6px] pl-[29px]">
        <ToolButton label="Previous sheet"><Icon w={16} h={22}><path d="M15 1v20L1 11z" fill="#b5b5b5" /></Icon></ToolButton>
        <ToolButton label="Next sheet"><Icon w={16} h={22}><path d="M1 1v20l14-10z" fill="#b5b5b5" /></Icon></ToolButton>
      </div>
      <button type="button" className="h-[46px] rounded-b-md border-x-2 border-b-2 border-[#bdbdbd] bg-white px-[38px] pt-1 text-[23px] font-bold text-[#2c8552]">
        College monthly budget
      </button>
      <div className="flex flex-1 border-t-2 border-[#cbcbcb]">
        <ToolButton label="Add sheet" className="h-[42px] w-[77px] border-r-2 border-[#cbcbcb] pt-1">
          <Icon w={20} h={20}><path d="M10 0v20M0 10h20" stroke="#4f4f4f" strokeWidth="3" /></Icon>
        </ToolButton>
      </div>
    </div>
  )
}

function StatusBar() {
  const [zoom, setZoom] = useState(50)
  return (
    <div className="flex h-11 items-center justify-between bg-linear-to-b from-[#e2e2e2] to-[#d6d6d6] pl-[49px] text-2xl text-[#4f4f4f]">
      <div className="flex items-center">
        <span>Ready</span>
        <button type="button" className="ml-[38px] flex items-center gap-[2px]">
          <AccessibilityIcon />
          Accessibility: Good to go
        </button>
      </div>
      <div className="flex h-full items-center pr-[54px]">
        <ToolButton label="Normal view" className="h-full w-[74px] bg-[#a6a6a6]">
          <Icon w={28} h={28}>
            <path d="M2 2h24v24H2zM2 10h24M2 18h24M10 2v24M18 2v24" stroke="#fff" strokeWidth="2" />
          </Icon>
        </ToolButton>
        <ToolButton label="Page layout view" className="ml-5">
          <Icon w={28} h={28}>
            <path d="M1 2h26v24H1zM7 6h14v16H7zM10 10h8M10 14h8M10 18h8" stroke="#666" strokeWidth="2" />
          </Icon>
        </ToolButton>
        <ToolButton label="Page break preview" className="ml-11">
          <Icon w={28} h={28}>
            <path d="M1 2h26v24H1zM1 16h17V2M9 2v14" stroke="#666" strokeWidth="2" />
          </Icon>
        </ToolButton>
        <ToolButton label="Zoom out" className="ml-[38px]">
          <Icon w={16} h={16}><path d="M0 8h16" stroke="#666" strokeWidth="4" /></Icon>
        </ToolButton>
        <span className="relative mx-[14px] flex h-8 w-[200px] items-center">
          <input
            type="range"
            aria-label="Zoom"
            min={10}
            max={190}
            value={zoom}
            onChange={(e) => setZoom(Number(e.target.value))}
            className="h-2 w-full appearance-none rounded-full bg-[#9b9b9b] [&::-webkit-slider-thumb]:size-8 [&::-webkit-slider-thumb]:appearance-none [&::-webkit-slider-thumb]:rounded-full [&::-webkit-slider-thumb]:bg-white [&::-webkit-slider-thumb]:shadow-md"
          />
          <span className="pointer-events-none absolute left-1/2 size-[6px] rounded-full bg-[#e0e0e0]" />
        </span>
        <ToolButton label="Zoom in">
          <Icon w={16} h={16}><path d="M0 8h16M8 0v16" stroke="#666" strokeWidth="4" /></Icon>
        </ToolButton>
        <span className="ml-10">{zoom}%</span>
      </div>
    </div>
  )
}

export default function App() {
  return (
    <main className="flex h-screen flex-col overflow-hidden bg-[#f4f4f4] font-['Inter',sans-serif]">
      <TitleBar />
      <TabBar />
      <Ribbon />
      <FormulaBar />
      <Sheet />
      <SheetTabs />
      <StatusBar />
    </main>
  )
}
